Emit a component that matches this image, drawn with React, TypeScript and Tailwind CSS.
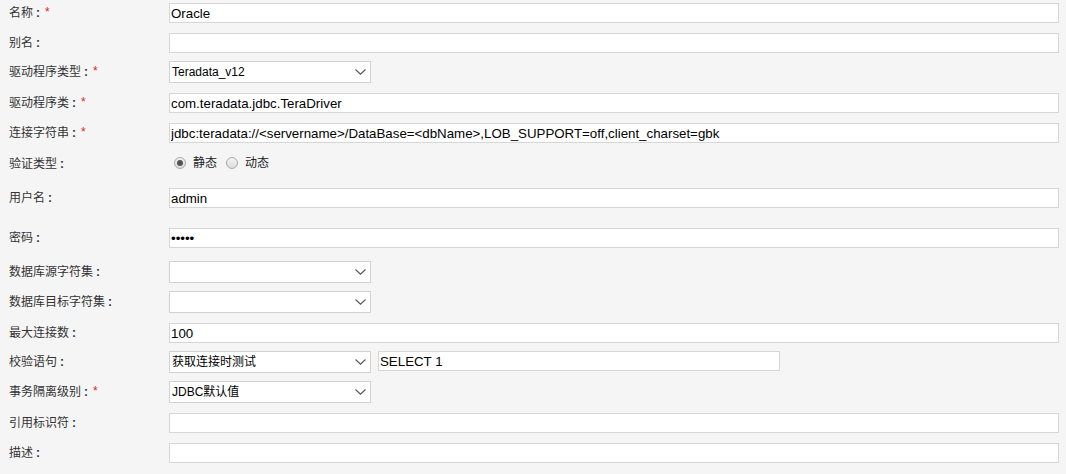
import React from 'react';

type Row =
  | { kind: 'input'; label: string; required?: boolean; value?: string; password?: boolean; rowClass: string }
  | { kind: 'select'; label: string; required?: boolean; value?: string; extra?: string; rowClass: string }
  | { kind: 'radio'; label: string; rowClass: string };

// row heights are the distance between control tops in the screenshot
const rows: Row[] = [
  { kind: 'input', label: '名称', required: true, value: 'Oracle', rowClass: 'h-[30px]' },
  { kind: 'input', label: '别名', rowClass: 'h-[29px]' },
  { kind: 'select', label: '驱动程序类型', required: true, value: 'Teradata_v12', rowClass: 'h-[31px]' },
  { kind: 'input', label: '驱动程序类', required: true, value: 'com.teradata.jdbc.TeraDriver', rowClass: 'h-[30px]' },
  {
    kind: 'input',
    label: '连接字符串',
    required: true,
    value: 'jdbc:teradata://<servername>/DataBase=<dbName>,LOB_SUPPORT=off,client_charset=gbk',
    rowClass: 'h-[30px]',
  },
  { kind: 'radio', label: '验证类型', rowClass: 'h-[35px]' },
  { kind: 'input', label: '用户名', value: 'admin', rowClass: 'h-[40px]' },
  { kind: 'input', label: '密码', value: 'admin', password: true, rowClass: 'h-[34px]' },
  { kind: 'select', label: '数据库源字符集', rowClass: 'h-[30px]' },
  { kind: 'select', label: '数据库目标字符集', rowClass: 'h-[31px]' },
  { kind: 'input', label: '最大连接数', value: '100', rowClass: 'h-[29px]' },
  { kind: 'select', label: '校验语句', value: '获取连接时测试', extra: 'SELECT 1', rowClass: 'h-[30px]' },
  { kind: 'select', label: '事务隔离级别', required: true, value: 'JDBC默认值', rowClass: 'h-[31px]' },
  { kind: 'input', label: '引用标识符', rowClass: 'h-[30px]' },
  { kind: 'input', label: '描述', rowClass: 'h-[30px]' },
];

const Label = ({ text, required, h }: { text: string; required?: boolean; h: string }) => (
  <div className={`w-[169px] shrink-0 pl-[9px] flex items-center text-[12px] text-[#333] ${h}`}>
    <span>{text}</span>
    {/* full-width colon drawn as a 12px cell so it sits like the original */}
    <span className="w-[12px] pl-[3px] font-bold text-[12px]">:</span>
    {required && <span className="text-[#e02020] -mt-[2px]">*</span>}
  </div>
);

const TextBox = ({ value, password, width }: { value?: string; password?: boolean; width?: string }) => (
  <input
    type={password ? 'password' : 'text'}
    defaultValue={value ?? ''}
    className={`h-[20px] ${width ?? 'flex-1'} bg-white border border-[#d6d6d6] px-[1px] text-[13.3px] text-black outline-none font-['Liberation_Sans','Noto_Sans_CJK_SC',sans-serif]`}
  />
);

const SelectBox = ({ value }: { value?: string }) => (
  <div className="relative w-[202px] h-[22px] shrink-0">
    <div className="h-full w-full bg-white border border-[#d2d2d2] pl-[2px] flex items-center text-[12px] text-black">
      {value}
    </div>
    <svg
      className="absolute right-[5px] top-[8px]"
      width="11"
      height="6"
      viewBox="0 0 11 6"
      fill="none"
    >
      <path d="M0.5 0.5 L5.5 5.2 L10.5 0.5" stroke="#555" strokeWidth="1.1" />
    </svg>
  </div>
);

const Radio = ({ checked, text }: { checked?: boolean; text: string }) => (
  <div className="flex items-center">
    <span className="w-[12px] h-[12px] rounded-full border border-[#a9a9a9] bg-gradient-to-b from-[#f4f4f4] to-[#dcdcdc] flex items-center justify-center">
      {checked && <span className="w-[6px] h-[6px] rounded-full bg-[#555]" />}
    </span>
    <span className="ml-[7px] text-[12px] text-[#222]">{text}</span>
  </div>
);

export default function App() {
  return (
    <div className="min-h-[474px] w-full bg-[#f5f5f5] pt-[3px] font-['Liberation_Sans','Noto_Sans_CJK_SC',sans-serif]">
      {rows.map((row, i) => {
        if (row.kind === 'radio') {
          return (
            <div key={i} className={`flex items-start ${row.rowClass}`}>
              <Label text={row.label} h="h-[20px] mt-[1px]" />
              <div className="h-[20px] flex items-center pl-[5px] gap-[9px]">
                <Radio checked text="静态" />
                <Radio text="动态" />
              </div>
            </div>
          );
        }
        if (row.kind === 'select') {
          return (
            <div key={i} className={`flex items-start -mt-[1px] mb-[1px] ${row.rowClass}`}>
              <Label text={row.label} required={row.required} h="h-[22px]" />
              <SelectBox value={row.value} />
              {row.extra && (
                <div className="ml-[7px] h-[19px] flex">
                  <TextBox value={row.extra} width="w-[402px] h-[19px]" />
                </div>
              )}
            </div>
          );
        }
        return (
          <div key={i} className={`flex items-start pr-[7px] ${row.rowClass}`}>
            <Label text={row.label} required={row.required} h="h-[20px]" />
            <TextBox value={row.value} password={row.password} />
          </div>
        );
      })}
    </div>
  );
}
